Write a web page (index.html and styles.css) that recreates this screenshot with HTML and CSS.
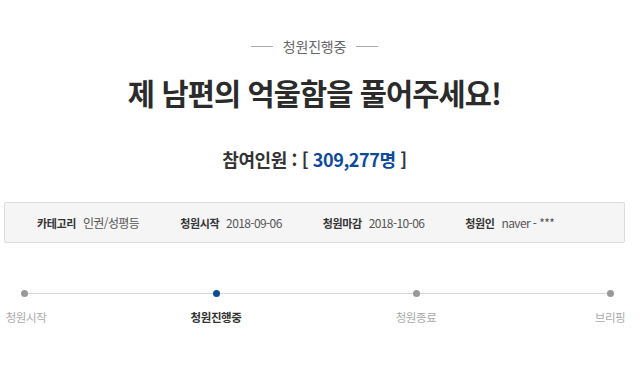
FILE: index.html
```html
<!DOCTYPE html>
<html lang="ko">
<head>
<meta charset="utf-8">
<title>청원진행중</title>
<link rel="stylesheet" href="styles.css">
</head>
<body>
<div class="page">
  <div class="status"><span class="dash"></span><span class="status-text">청원진행중</span><span class="dash"></span></div>
  <h1 class="title">제 남편의 억울함을 풀어주세요!</h1>
  <p class="count">참여인원 : [ <span class="num">309,277명</span> ]</p>
  <ul class="info">
    <li class="item"><strong>카테고리</strong><span>인권/성평등</span></li>
    <li class="item"><strong>청원시작</strong><span>2018-09-06</span></li>
    <li class="item"><strong>청원마감</strong><span>2018-10-06</span></li>
    <li class="item"><strong>청원인</strong><span>naver - ***</span></li>
  </ul>
  <ol class="steps">
    <li class="step"><span class="dot"></span><span class="label">청원시작</span></li>
    <li class="step active"><span class="dot"></span><span class="label">청원진행중</span></li>
    <li class="step"><span class="dot"></span><span class="label">청원종료</span></li>
    <li class="step"><span class="dot"></span><span class="label">브리핑</span></li>
  </ol>
</div>
</body>
</html>
```
FILE: styles.css
```css
* { box-sizing: border-box; }
html, body { margin: 0; padding: 0; background: #fff; }
body {
  font-family: "Noto Sans CJK KR", "Noto Sans", sans-serif;
  color: #333;
}
.page {
  width: 621px;
  margin-left: 4px;
  padding-top: 36px;
}
.status {
  display: flex;
  justify-content: center;
  align-items: center;
  gap: 10px;
  height: 20px;
}
.status-text {
  font-size: 14px;
  line-height: 20px;
  color: #666;
  letter-spacing: -0.2px;
}
.dash {
  width: 22px;
  height: 1px;
  background: #aaa;
}
.title {
  margin: 16px 0 0;
  text-align: center;
  font-size: 29.5px;
  line-height: 40px;
  font-weight: 700;
  color: #2b2b2b;
  letter-spacing: -0.9px;
}
.count {
  margin: 34px 0 0;
  text-align: center;
  font-size: 18px;
  line-height: 26px;
  font-weight: 700;
  color: #333;
  letter-spacing: -0.4px;
}
.count .num { color: #0d4a9b; }
.info {
  list-style: none;
  margin: 30px 0 0;
  padding: 0 0 0 32px;
  height: 41px;
  display: flex;
  align-items: center;
  gap: 41px;
  background: #f5f5f5;
  border: 1px solid #dcdcdc;
  border-radius: 2px;
}
.item { display: flex; align-items: center; gap: 7px; }
.item strong { font-weight: 700; color: #333; font-size: 11px; letter-spacing: -0.4px; }
.item span { color: #555; font-size: 12px; letter-spacing: -0.6px; }
.steps {
  list-style: none;
  position: relative;
  width: 629px;
  margin: 47px 0 0;
  padding: 0;
  display: flex;
}
.steps::before {
  content: "";
  position: absolute;
  left: 20px;
  right: 22px;
  top: 3px;
  height: 1px;
  background: #d6d6d6;
}
.step {
  position: relative;
  width: 44px;
  display: flex;
  flex-direction: column;
  align-items: center;
}
.step:nth-child(2) { margin-left: 146px; }
.step:nth-child(3) { margin-left: 156px; }
.step:nth-child(4) { margin-left: 150px; }
.dot {
  width: 7px;
  height: 7px;
  border-radius: 50%;
  background: #999;
}
.step:first-child .dot { margin-right: 3px; }
.label {
  margin-top: 12px;
  font-size: 11.5px;
  line-height: 16px;
  white-space: nowrap;
  color: #aaa;
  letter-spacing: -0.4px;
}
.step.active .dot { background: #0d4a9b; }
.step.active .label { color: #333; font-weight: 700; }
```
